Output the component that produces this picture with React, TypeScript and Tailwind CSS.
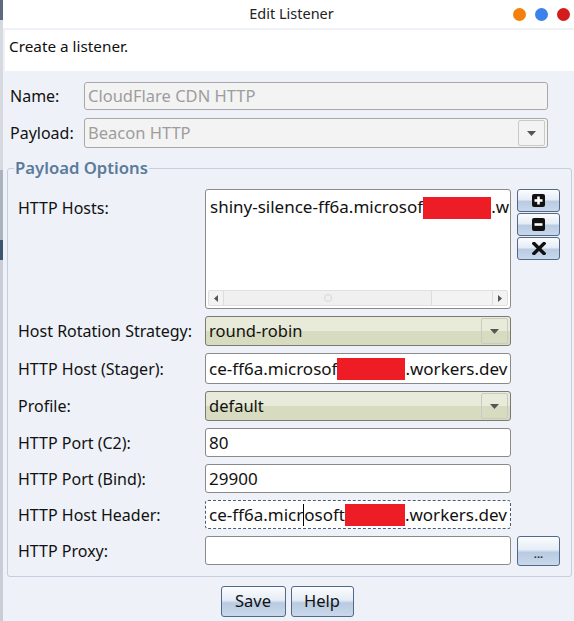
import React from "react"

const font = "font-['Noto_Sans','Open_Sans',sans-serif]"

const btn =
  "border border-[#52688a] rounded-[3px] bg-[linear-gradient(to_bottom,#fbfcfe_0%,#e6edf6_45%,#b9cbe2_55%,#c9d8ea_100%)] flex items-center justify-center"

const Redact = ({ w }: { w: number }) => (
  <span className="inline-block bg-[#ee1c25] h-[22px] align-middle" style={{ width: w }} />
)

const Arrow = () => (
  <div className="w-[27px] h-[26px] mr-[2px] border border-[#c8ccc0] rounded-[2px] flex items-center justify-center">
    <svg width="9" height="5" viewBox="0 0 9 5">
      <path d="M0 0 L9 0 L4.5 5 Z" fill="#555" />
    </svg>
  </div>
)

const Combo = ({ value, disabled }: { value: string; disabled?: boolean }) => (
  <div
    className={
      disabled
        ? "h-[30px] border border-[#a8a8a8] rounded-[3px] bg-[#f3f3f3] flex items-center justify-between pl-[3px] text-[16.5px]"
        : "h-[30px] border border-[#7a7a70] rounded-[3px] bg-[linear-gradient(to_bottom,#e8ebda_0%,#e8ebda_50%,#d7dcc0_50%,#d7dcc0_100%)] flex items-center justify-between pl-[3px] text-[16.5px]"
    }
  >
    <span className={disabled ? "text-[#9d9d9d]" : "text-[#111]"}>{value}</span>
    <Arrow />
  </div>
)

const Field = ({ children, focus }: { children?: React.ReactNode; focus?: boolean }) => (
  <div
    className={
      focus
        ? "h-[29px] border border-dashed border-[#4a5a78] rounded-[3px] bg-white flex items-center pl-[3px] overflow-hidden whitespace-nowrap text-[17px] text-[#111]"
        : "h-[29px] border border-[#8a8a8a] rounded-[3px] bg-white flex items-center pl-[3px] overflow-hidden whitespace-nowrap text-[17px] text-[#111]"
    }
  >
    {children}
  </div>
)

const Label = ({ text }: { text: string }) => (
  <div className="flex items-center text-[#111]">{text}</div>
)

export default function App() {
  return (
    <div className={`w-[574px] h-[621px] flex overflow-hidden text-[16px] ${font}`}>
      {/* background app strip */}
      <div className="w-[3px] flex flex-col">
        <div className="h-[20px] bg-[#5d6b7c]" />
        <div className="h-[150px] bg-[#d6d9de]" />
        <div className="h-[70px] bg-[#aab2bc]" />
        <div className="h-[20px] bg-[#3e5670]" />
        <div className="flex-1 bg-[#c9ced6]" />
      </div>

      <div className="flex-1 flex flex-col bg-[#eef1f8]">
        {/* title bar */}
        <div className="h-[28px] bg-white grid grid-cols-[1fr_auto_1fr] items-center">
          <div />
          <div className="text-[14.5px] text-[#222] pl-[6px]">Edit Listener</div>
          <div className="flex justify-end gap-[9px] pr-[4px]">
            <div className="w-[13px] h-[13px] rounded-full bg-[#f57f0b]" />
            <div className="w-[13px] h-[13px] rounded-full bg-[#3b82ed]" />
            <div className="w-[13px] h-[13px] rounded-full bg-[#d41c1c]" />
          </div>
        </div>

        {/* description */}
        <div className="mt-[2px] ml-[2px] h-[41px] bg-white pl-[4px] pt-[5px] text-[15.3px] text-[#111]">
          Create a listener.
        </div>

        {/* name/payload */}
        <div className="mt-[11px] pl-[7px] pr-[26px] grid grid-cols-[74px_1fr] gap-y-[8px]">
          <Label text="Name:" />
          <div className="h-[28px] border border-[#a8a8a8] rounded-[3px] bg-[#f3f3f3] flex items-center pl-[3px] text-[16.5px] text-[#9d9d9d]">
            CloudFlare CDN HTTP
          </div>
          <Label text="Payload:" />
          <Combo value="Beacon HTTP" disabled />
        </div>

        {/* group box */}
        <fieldset className="mt-[10px] ml-[4px] mr-[2px] border border-[#c4cedc] rounded-[3px] pl-[10px] pt-[2px] pb-[10px]">
          <legend className="-ml-[4px] px-[1px] text-[16.7px] text-[#5b7b9b] font-semibold leading-[20px]">
            Payload Options
          </legend>
          <div className="grid grid-cols-[187px_306px_auto] gap-y-[7px] mt-[9px]">
            {/* hosts */}
            <div className="text-[#111] pt-[7px]">HTTP Hosts:</div>
            <div className="h-[120px] border border-[#8a8a8a] rounded-[3px] bg-white flex flex-col">
              <div className="flex-1 pl-[4px] pt-[6px] whitespace-nowrap overflow-hidden leading-[22px] text-[17px] text-[#111]">
                shiny-silence-ff6a.microsof
                <Redact w={68} />
                .w
              </div>
              <div className="h-[16px] mx-[2px] mb-[2px] flex items-center bg-[#f3f3f3] border border-[#e0e0e0] rounded-[2px]">
                <div className="w-[15px] h-full flex items-center justify-center border-r border-[#dcdcdc]">
                  <svg width="4" height="7" viewBox="0 0 4 7">
                    <path d="M4 0 L0 3.5 L4 7 Z" fill="#555" />
                  </svg>
                </div>
                <div className="w-[208px] h-full bg-[#f0f0f0] border-r border-[#dcdcdc] flex items-center justify-center">
                  <div className="w-[8px] h-[8px] rounded-full border border-[#d6d6d6]" />
                </div>
                <div className="flex-1" />
                <div className="w-[15px] h-full flex items-center justify-center border-l border-[#dcdcdc]">
                  <svg width="4" height="7" viewBox="0 0 4 7">
                    <path d="M0 0 L4 3.5 L0 7 Z" fill="#555" />
                  </svg>
                </div>
              </div>
            </div>
            <div className="pl-[6px] flex flex-col gap-[1px]">
              <div className={`${btn} w-[43px] h-[23px]`}>
                <svg width="13" height="13" viewBox="0 0 13 13">
                  <rect width="13" height="13" rx="2" fill="#111" />
                  <rect x="2.5" y="5.2" width="8" height="2.6" fill="#fff" />
                  <rect x="5.2" y="2.5" width="2.6" height="8" fill="#fff" />
                </svg>
              </div>
              <div className={`${btn} w-[43px] h-[23px]`}>
                <svg width="13" height="13" viewBox="0 0 13 13">
                  <rect width="13" height="13" rx="2" fill="#111" />
                  <rect x="2.5" y="5.2" width="8" height="2.6" fill="#fff" />
                </svg>
              </div>
              <div className={`${btn} w-[43px] h-[23px]`}>
                <svg width="14" height="13" viewBox="0 0 14 13">
                  <path d="M2 1.5 L12 11.5 M12 1.5 L2 11.5" stroke="#111" strokeWidth="3.4" strokeLinecap="square" />
                </svg>
              </div>
            </div>

            <Label text="Host Rotation Strategy:" />
            <Combo value="round-robin" />
            <div />

            <Label text="HTTP Host (Stager):" />
            <div className="h-[31px] border border-[#8a8a8a] rounded-[3px] bg-white flex items-center pl-[3px] overflow-hidden whitespace-nowrap text-[17px] text-[#111]">
              ce-ff6a.microsof
              <Redact w={68} />
              .workers.dev
            </div>
            <div />

            <Label text="Profile:" />
            <Combo value="default" />
            <div />

            <Label text="HTTP Port (C2):" />
            <Field>80</Field>
            <div />

            <Label text="HTTP Port (Bind):" />
            <Field>29900</Field>
            <div />

            <Label text="HTTP Host Header:" />
            <Field focus>
              ce-ff6a.micr
              <span className="inline-block w-[1px] h-[22px] bg-black align-middle" />
              osoft
              <Redact w={60} />
              .workers.dev
            </Field>
            <div />

            <Label text="HTTP Proxy:" />
            <Field />
            <div className="pl-[6px]">
              <div className={`${btn} w-[43px] h-[30px] text-[11px] font-bold text-[#333] pt-[6px]`}>...</div>
            </div>
          </div>
        </fieldset>

        {/* footer buttons */}
        <div className="mt-[9px] flex justify-center gap-[5px] pr-[3px]">
          <div className={`${btn} w-[65px] h-[31px] text-[16.5px] text-[#111]`}>Save</div>
          <div className={`${btn} w-[63px] h-[31px] text-[16.5px] text-[#111]`}>Help</div>
        </div>
      </div>
    </div>
  )
}
